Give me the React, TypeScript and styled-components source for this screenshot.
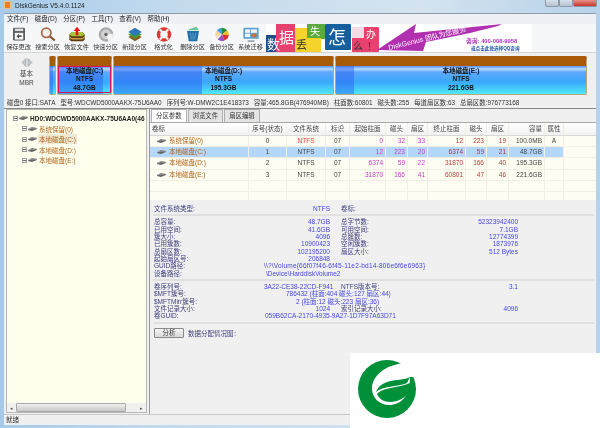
import React from 'react';
import styled, {createGlobalStyle} from 'styled-components';

const GlobalStyle = createGlobalStyle`
  html, body {
    margin: 0;
    padding: 0;
    background: #a9cdea;
  }
`;

const Window = styled.div`
  position: relative;
  width: 600px;
  height: 428px;
  overflow: hidden;
  display: flex;
  flex-direction: column;
  font-family: "Liberation Sans", "Noto Sans CJK SC", sans-serif;
  font-size: 6.5px;
  color: #333;
  background: linear-gradient(90deg, #a6cbea, #c4dbee 30%, #d4e3ef 70%, #b6d2ea);
  filter: blur(0.25px);
`;

const TitleBar = styled.div`
  height: 13px;
  flex: none;
  display: flex;
  align-items: flex-start;
  padding: 1px 3px 0 4px;
  box-sizing: border-box;
  gap: 4px;
  font-size: 6.5px;
  line-height: 9px;
  color: #222;
`;

const AppIcon = styled.div`
  width: 7px;
  height: 8px;
  border-radius: 1px;
  background: #ee7d2a;
  box-shadow: inset 0 0 0 1px #f8c080;
`;

const Controls = styled.div`
  margin-left: auto;
  display: flex;
  margin-top: -1px;
`;

const ControlButton = styled.div<{$close?: boolean}>`
  width: ${p => (p.$close ? 24 : 14)}px;
  height: 7px;
  border: 1px solid #8b98a6;
  border-top: none;
  box-sizing: border-box;
  border-radius: 0 0 2px 2px;
  background: ${p => (p.$close ? 'linear-gradient(#e8938a, #c8362a)' : 'linear-gradient(#d8e2ec, #b4c2d0)')};
`;

const Client = styled.div`
  flex: 1;
  min-height: 0;
  margin: 0 4px 3px 4px;
  border-top: 1px solid #8f9aa6;
  display: flex;
  flex-direction: column;
  background: #f0f0f0;
`;

const MenuBar = styled.div`
  height: 10px;
  flex: none;
  display: flex;
  gap: 6.5px;
  padding-left: 3px;
  line-height: 9px;
  background: #edf1f6;
  color: #222;
`;

const ToolBar = styled.div`
  height: 29px;
  box-sizing: border-box;
  flex: none;
  display: flex;
  background: #f6f7f8;
  border-bottom: 1px solid #d4d4d4;
`;

const ToolGroup = styled.div`
  display: flex;
  width: 262px;
  flex: none;
`;

const ToolButton = styled.div`
  width: 29px;
  flex: none;
  display: flex;
  flex-direction: column;
  align-items: center;
  padding-top: 2px;
  font-size: 6.2px;
  line-height: 8px;
  white-space: nowrap;
  color: #333;
  svg {
    width: 18px;
    height: 17px;
    flex: none;
  }
`;

const Banner = styled.svg`
  width: 266px;
  height: 28px;
  flex: none;
  background: #fff;
`;

const DiskArea = styled.div`
  height: 44px;
  flex: none;
  display: flex;
  background: #f0f0f0;
  padding-top: 3px;
  box-sizing: border-box;
`;

const DiskNav = styled.div`
  width: 45px;
  flex: none;
  display: flex;
  flex-direction: column;
  align-items: center;
  line-height: 9px;
  color: #444;
  svg {
    width: 12px;
    height: 9px;
    margin: 2px 0 2px;
  }
`;

const PartitionBar = styled.div`
  display: flex;
  gap: 1px;
  width: 538px;
  height: 39px;
  flex: none;
`;

const Partition = styled.div<{$grow: number; $used: number}>`
  position: relative;
  flex: 0 0 ${p => p.$grow}px;
  box-sizing: border-box;
  border: 1px solid #b6a878;
  border-top: 10px solid #a85a08;
  border-radius: 2px;
  display: flex;
  flex-direction: column;
  align-items: center;
  padding-top: 0.5px;
  font-weight: bold;
  line-height: 8.7px;
  color: #111;
  overflow: hidden;
  background:
    linear-gradient(90deg, rgba(40, 90, 240, 0.45) ${p => p.$used}%, transparent ${p => p.$used}%),
    linear-gradient(#4c8ff6 0, #bcdcff 3px, #5ea8fb 6px, #3aa8fb 16px, #4fe9fb 100%);
`;

const PartitionLine = styled.div`
  position: relative;
`;

const Highlight = styled.div`
  position: absolute;
  inset: 0 0 1px 0;
  border: 1.5px solid #e0105c;
`;

const DiskInfo = styled.div`
  height: 12px;
  box-sizing: border-box;
  flex: none;
  display: flex;
  gap: 5px;
  padding-left: 3px;
  align-items: center;
  white-space: nowrap;
  color: #333;
  font-size: 6.4px;
  border-bottom: 1px solid #888;
`;

const Panes = styled.div`
  flex: 1;
  min-height: 0;
  display: flex;
  gap: 2px;
  padding-left: 2px;
`;

const TreePane = styled.div`
  width: 141px;
  flex: none;
  display: flex;
  flex-direction: column;
  background: #ffffee;
  border: 1px solid #b8b8b8;
  box-sizing: border-box;
  margin-bottom: 1px;
`;

const Tree = styled.div`
  flex: 1;
  padding: 3px 0 0 6px;
  overflow: hidden;
`;

const TreeNode = styled.div<{$child?: boolean; $selected?: boolean}>`
  height: 10.5px;
  display: flex;
  align-items: center;
  gap: 1px;
  padding-left: ${p => (p.$child ? 9 : 0)}px;
  white-space: nowrap;
  font-weight: ${p => (p.$child ? 'normal' : 'bold')};
  color: ${p => (p.$child ? '#b0641a' : '#222')};
  svg {
    flex: none;
  }
  span {
    background: ${p => (p.$selected ? '#eee9d4' : 'transparent')};
    padding: 0 1px;
  }
`;

const Expander = styled.div`
  position: relative;
  width: 5px;
  height: 5px;
  flex: none;
  box-sizing: border-box;
  border: 1px solid #9a9a9a;
  background: #fff;
  &::after {
    content: '';
    position: absolute;
    left: 0;
    top: 1px;
    width: 3px;
    height: 1px;
    background: #667;
  }
`;

const HBar = styled.div`
  height: 9px;
  flex: none;
  display: flex;
  align-items: center;
  background: #f0f0f0;
  color: #555;
  font-size: 5px;
  justify-content: space-between;
  padding: 0 3px;
  position: relative;
`;

const HThumb = styled.div`
  position: absolute;
  left: 9px;
  right: 20px;
  top: 0;
  bottom: 0;
  border: 1px solid #a8a8a8;
  box-sizing: border-box;
  border-radius: 1px;
  background: linear-gradient(#f0f0f0, #c8c8c8);
`;

const RightPane = styled.div`
  flex: 1;
  min-width: 0;
  display: flex;
  flex-direction: column;
  border-left: 1px solid #9a9a9a;
`;

const Tabs = styled.div`
  height: 14px;
  flex: none;
  display: flex;
  padding-left: 1px;
  border-bottom: 1px solid #a8a8a8;
  box-sizing: border-box;
`;

const Tab = styled.div<{$active?: boolean}>`
  padding: 0 4px;
  line-height: 12px;
  border: 1px solid #b0b0b0;
  border-bottom: none;
  background: ${p => (p.$active ? '#fff' : '#e4e4e4')};
  margin-right: 1px;
  color: #333;
  font-size: 6.4px;
`;

const Table = styled.div`
  flex: none;
  height: 77px;
  overflow: hidden;
  background: #fffdf2;
`;

const columns = '99px 38px 39px 24px 36px 22px 20px 38px 21px 22px 36px 19px 1fr';

const TableRow = styled.div<{$selected?: boolean; $header?: boolean}>`
  display: grid;
  grid-template-columns: ${columns};
  height: ${p => (p.$header ? 13 : 11.2)}px;
  background: ${p => (p.$header ? 'linear-gradient(#fff, #f2f2f2)' : 'transparent')};
  border-bottom: 1px solid ${p => (p.$header ? '#d8d8d8' : '#f2f0e6')};
  box-sizing: border-box;
  line-height: ${p => (p.$header ? 12 : 10)}px;
  color: #444;
  white-space: nowrap;
`;

const Cell = styled.div<{$align?: string; $color?: string; $on?: boolean; $last?: boolean}>`
  text-align: ${p => p.$align ?? 'center'};
  color: ${p => p.$color ?? 'inherit'};
  padding: 0 2px;
  box-sizing: border-box;
  border-right: ${p => (p.$last ? 'none' : '1px solid #efefe4')};
  background: ${p => (p.$on ? '#b4d8fd' : 'transparent')};
  min-width: 0;
  overflow: hidden;
`;

const NameCell = styled(Cell)`
  display: flex;
  align-items: center;
  gap: 3px;
  padding-left: 7px;
  color: #b0641a;
  svg {
    flex: none;
  }
`;

const Details = styled.div`
  flex: 1;
  min-height: 0;
  padding: 5px 2px 0 3px;
`;

const Section = styled.div`
  padding: 0 0 2px;
  margin-bottom: 2px;
  border-bottom: 2px solid #e0e0e0;
`;

const InfoRow = styled.div`
  display: grid;
  grid-template-columns: 110px 66px 11px 82px 95px;
  height: 7.33px;
  line-height: 7.33px;
  white-space: nowrap;
  color: #3c3c7c;
  padding-left: 1px;
`;

const Value = styled.div`
  color: #4646e6;
  text-align: right;
`;

const WideValue = styled.div<{$pad: number; $track?: number}>`
  grid-column: 2 / -1;
  color: #4646e6;
  padding-left: ${p => p.$pad}px;
  letter-spacing: ${p => p.$track ?? 0}px;
`;

const AnalyzeRow = styled.div`
  display: flex;
  align-items: center;
  gap: 4px;
  padding: 2px 0 0 1px;
  color: #3c3c7c;
`;

const AnalyzeButton = styled.div`
  width: 30px;
  height: 10px;
  box-sizing: border-box;
  border: 1px solid #8a8a8a;
  border-radius: 1px;
  background: linear-gradient(#f6f6f6, #d8d8d8);
  text-align: center;
  line-height: 8px;
  color: #333;
`;

const StatusBar = styled.div`
  height: 10px;
  flex: none;
  border-top: 1px solid #c8c8c8;
  padding-left: 2px;
  line-height: 9px;
  background: #f0f0f0;
  color: #333;
`;

const LogoBox = styled.div`
  position: absolute;
  left: 350px;
  top: 353px;
  width: 250px;
  height: 75px;
  background: #fff;
  svg {
    position: absolute;
    left: 8px;
    top: 7px;
  }
`;

const menus = ['文件(F)', '磁盘(D)', '分区(P)', '工具(T)', '查看(V)', '帮助(H)'];

const tools: [string, React.ReactNode][] = [
  ['保存更改', <>
    <rect x="3" y="2" width="14" height="15" rx="1.5" fill="#555"/>
    <rect x="5" y="3" width="10" height="3" fill="#ddd"/>
    <rect x="5" y="8" width="10" height="8" fill="#f4f4f4"/>
    <path d="M7 12l3-3v2h3v2h-3v2z" fill="#555"/>
  </>],
  ['搜索分区', <>
    <circle cx="8" cy="8" r="5.5" fill="#f4efe8" stroke="#a8664a" strokeWidth="2"/>
    <path d="M12 12l6 5" stroke="#8a4a30" strokeWidth="2.4"/>
  </>],
  ['恢复文件', <>
    <path d="M1 10l3-3h12l3 3v6l-2 2H3l-2-2z" fill="#5a3a10"/>
    <path d="M1 10l3-3h12l3 3-3 2H4z" fill="#a8c23a"/>
    <path d="M1 12l3 2h12l3-2v2l-3 2H4l-3-2z" fill="#c8a050"/>
    <path d="M8.5 11V6H6l4-5 4 5h-2.500v5z" fill="#e81818"/>
  </>],
  ['快速分区', <>
    <circle cx="10" cy="10" r="8.500" fill="#a8a8a8"/>
    <circle cx="10" cy="10" r="6" fill="#d0d0d0"/>
    <path d="M10 10l8-1 0 7-5 2z" fill="#f4f4f4"/>
    <circle cx="10" cy="10" r="2" fill="#666"/>
  </>],
  ['新建分区', <>
    <path d="M10 9l8 4-8 5-8-5z" fill="#8a5a20"/>
    <path d="M10 6l8 4-8 5-8-5z" fill="#4a9a30"/>
    <path d="M10 2l8 5-8 5-8-5z" fill="#2a78b8"/>
  </>],
  ['格式化', <>
    <circle cx="10" cy="10" r="6.500" fill="none" stroke="#d83a30" strokeWidth="4"/>
    <path d="M5 4l3 3M15 4l-3 3M5 16l3-3M15 16l-3-3" stroke="#f4f4f4" strokeWidth="2.500"/>
  </>],
  ['删除分区', <>
    <path d="M3 6h14l-2 12H5z" fill="#1f6fa8"/>
    <path d="M2 5l12-4 3 4z" fill="#6cc29a"/>
    <path d="M7 8l1 8M10 8v8M13 8l-1 8" stroke="#7ab4d8" strokeWidth="0.800"/>
  </>],
  ['备份分区', <>
    <circle cx="10" cy="10" r="8" fill="#eee"/>
    <path d="M10 10V2a8 8 0 0 1 6 3z" fill="#2a8a3a"/>
    <path d="M10 10l6-5a8 8 0 0 1 2 6z" fill="#e8c020"/>
    <path d="M10 10l8 1a8 8 0 0 1-5 6z" fill="#d83030"/>
    <path d="M10 10l3 7a8 8 0 0 1-8-1z" fill="#9a50c0"/>
    <path d="M10 10l-7 3a8 8 0 0 1 1-8z" fill="#f0d8a0"/>
    <path d="M10 10L4 5a8 8 0 0 1 6-3z" fill="#3aa0d8"/>
  </>],
  ['系统迁移', <>
    <rect x="1" y="2" width="18" height="13" rx="1" fill="#5aa0d0"/>
    <rect x="3" y="4" width="6" height="4" fill="#f0f6fc"/>
    <rect x="3" y="9" width="6" height="4" fill="#f0f6fc"/>
    <rect x="10" y="4" width="7" height="4" fill="#f0f6fc"/>
    <path d="M6 17h8v1.500H6z" fill="#7a8a98"/>
    <path d="M10 10h4V8l3 3-3 3v-2h-4z" fill="#e8641a"/>
  </>],
];

const partitions = [
  {width: 7, used: 60, lines: []},
  {width: 55, used: 85, lines: ['本地磁盘(C:)', 'NTFS', '48.7GB'], highlight: true},
  {width: 221, used: 40, lines: ['本地磁盘(D:)', 'NTFS', '195.3GB']},
  {width: 252, used: 7, lines: ['本地磁盘(E:)', 'NTFS', '221.6GB']},
];

const names = ['系统保留(0)', '本地磁盘(C:)', '本地磁盘(D:)', '本地磁盘(E:)'];

const rows = [
  {name: names[0], cells: ['0', 'NTFS', '07', '0', '32', '33', '12', '223', '19', '100.0MB', 'A']},
  {name: names[1], cells: ['1', 'NTFS', '07', '12', '223', '20', '6374', '59', '21', '48.7GB', ''], selected: true},
  {name: names[2], cells: ['2', 'NTFS', '07', '6374', '59', '22', '31870', '166', '40', '195.3GB', '']},
  {name: names[3], cells: ['3', 'NTFS', '07', '31870', '166', '41', '60801', '47', '46', '221.6GB', '']},
];

const headers = ['序号(状态)', '文件系统', '标识', '起始柱面', '磁头', '扇区', '终止柱面', '磁头', '扇区', '容量', '属性'];

const DriveIcon = () => (
  <svg width="9" height="6" viewBox="0 0 9 6">
    <path d="M0 3l4-2 5 1v1L4 5 0 4z" fill="#666"/>
    <path d="M0 3l4-1 5 0" stroke="#ccc" strokeWidth="0.600" fill="none"/>
  </svg>
);

const cellColor = (col: number, row: number, selected?: boolean) => {
  if (col === 1 && row === 0) return '#f03c3c';
  if (col >= 3 && col <= 5) return '#c63cc8';
  if (col >= 6 && col <= 8) return selected ? '#a03c50' : '#b83c3c';
  return undefined;
};

const cellAlign = (col: number) => (col >= 3 && col <= 9 ? 'right' : 'center');

function PartitionTable() {
  const blank = Array.from({length: 12}, (_, i) => i);
  return <Table>
    <TableRow $header>
      <Cell $align="left">卷标</Cell>
      {headers.map((h, i) => <Cell key={i} $align={i === 9 ? 'right' : 'center'}>{h}</Cell>)}
      <Cell $last/>
    </TableRow>
    {rows.map((row, r) => (
      <TableRow key={row.name}>
        <NameCell $on={row.selected}><DriveIcon/>{row.name}</NameCell>
        {row.cells.map((c, i) => (
          <Cell key={i} $on={row.selected} $align={cellAlign(i)} $color={cellColor(i, r, row.selected)}>{c}</Cell>
        ))}
        <Cell $last/>
      </TableRow>
    ))}
    {[0, 1].map(r => (
      <TableRow key={r}>
        {blank.map(i => <Cell key={i}/>)}
        <Cell $last/>
      </TableRow>
    ))}
  </Table>;
}

function Info({a, b, c, d}: {a: string; b?: string; c?: string; d?: string}) {
  return <InfoRow>
    <div>{a}</div>
    <Value>{b}</Value>
    <div/>
    <div>{c}</div>
    <Value>{d}</Value>
  </InfoRow>;
}

function Wide({label, value, pad, track}: {label: string; value: string; pad: number; track?: number}) {
  return <InfoRow>
    <div>{label}</div>
    <WideValue $pad={pad} $track={track}>{value}</WideValue>
  </InfoRow>;
}

function DetailPanel() {
  return <Details>
    <Section>
      <Info a="文件系统类型:" b="NTFS" c="卷标:"/>
    </Section>
    <Section>
      <Info a="总容量:" b="48.7GB" c="总字节数:" d="52323942400"/>
      <Info a="已用空间:" b="41.6GB" c="可用空间:" d="7.1GB"/>
      <Info a="簇大小:" b="4096" c="总簇数:" d="12774399"/>
      <Info a="已用簇数:" b="10900423" c="空闲簇数:" d="1873976"/>
      <Info a="总扇区数:" b="102195200" c="扇区大小:" d="512 Bytes"/>
      <Info a="起始扇区号:" b="206848"/>
      <Wide label="GUID路径:" value="\\?\Volume{66f07f46-6f45-11e2-bd14-806e6f6e6963}" pad={0} track={0.2}/>
      <Wide label="设备路径:" value="\Device\HarddiskVolume2" pad={2}/>
    </Section>
    <Section>
      <Info a="卷序列号:" b="3A22-CE38-22CD-F941" c="NTFS版本号:" d="3.1"/>
      <Wide label="$MFT簇号:" value="786432 (柱面:404 磁头:127 扇区:44)" pad={22}/>
      <Wide label="$MFTMirr簇号:" value="2 (柱面:12 磁头:223 扇区:36)" pad={32}/>
      <Info a="文件记录大小:" b="1024" c="索引记录大小:" d="4096"/>
      <Wide label="卷GUID:" value="059B62CA-2170-4935-9A27-1D7F97A63D71" pad={1}/>
    </Section>
    <AnalyzeRow>
      <AnalyzeButton>分析</AnalyzeButton>
      数据分配情况图：
    </AnalyzeRow>
  </Details>;
}

export default function App() {
  return <Window>
    <GlobalStyle/>
    <TitleBar>
      <AppIcon/>
      DiskGenius V5.4.0.1124
      <Controls>
        <ControlButton/>
        <ControlButton/>
        <ControlButton $close/>
      </Controls>
    </TitleBar>
    <Client>
      <MenuBar>{menus.map(m => <div key={m}>{m}</div>)}</MenuBar>
      <ToolBar>
        <ToolGroup>
          {tools.map(([label, icon]) => (
            <ToolButton key={label}>
              <svg viewBox="0 0 20 20">{icon}</svg>
              {label}
            </ToolButton>
          ))}
        </ToolGroup>
        <Banner viewBox="0 0 266 28">
          <rect x="0" y="11" width="15" height="17" fill="#1a4f8c"/>
          <rect x="10" y="0" width="19" height="28" fill="#e8416e"/>
          <rect x="29" y="4" width="12" height="24" fill="#f6d22c"/>
          <rect x="41" y="0" width="18" height="15" fill="#5aaa3c"/>
          <rect x="36" y="14" width="19" height="14" fill="#f6d22c"/>
          <rect x="59" y="0" width="26" height="26" rx="1" fill="#155f9e"/>
          <rect x="86" y="14" width="12" height="14" fill="#f6d22c"/>
          <rect x="86" y="3" width="27" height="25" rx="1" fill="#e8416e"/>
          <rect x="86" y="3" width="12" height="11" fill="#f4dce4"/>
          <text x="1" y="25" fontSize="13" fill="#fff">数</text>
          <text x="13" y="19" fontSize="15" fill="#fff">据</text>
          <text x="30" y="25" fontSize="11" fill="#333">丢</text>
          <text x="44" y="11" fontSize="10" fill="#fff">失</text>
          <text x="62" y="20" fontSize="18" fill="#fff">怎</text>
          <text x="87" y="26" fontSize="10" fill="#333">么</text>
          <text x="100" y="14" fontSize="10" fill="#fff">办</text>
          <text x="102" y="26" fontSize="10" fill="#333">!</text>
          <path d="M111 26L150 0l-2 9 88-9-4 2-28 7-44 9-3 9z" fill="#b030b0"/>
          <text x="123" y="26" fontSize="7" fill="#fff" transform="rotate(-13.700 123 26)">DiskGenius 团队为您服务</text>
          <text x="200" y="19" fontSize="5.800" fontWeight="bold" fill="#b030c0">咨询: 400-008-9958</text>
          <text x="205" y="26" fontSize="4.600" fontWeight="bold" fill="#1a4fa8">或点击此处选择QQ咨询</text>
        </Banner>
      </ToolBar>
      <DiskArea>
        <DiskNav>
          <svg viewBox="0 0 12 9">
            <path d="M5 0.500L1 4.500l4 4zM7 0.500l4 4-4 4z" fill="#c4c8cc" stroke="#8a8a8a" strokeWidth="0.500"/>
          </svg>
          <div>基本</div>
          <div>MBR</div>
        </DiskNav>
        <PartitionBar>
          {partitions.map((p, i) => (
            <Partition key={i} $grow={p.width} $used={p.used}>
              {p.lines.map(l => <PartitionLine key={l}>{l}</PartitionLine>)}
              {p.highlight ? <Highlight/> : null}
            </Partition>
          ))}
        </PartitionBar>
      </DiskArea>
      <DiskInfo>
        <span>磁盘0 接口:SATA</span>
        <span>型号:WDCWD5000AAKX-75U6AA0</span>
        <span>序列号:W-DMW2C1E418373</span>
        <span>容量:465.8GB(476940MB)</span>
        <span>柱面数:60801</span>
        <span>磁头数:255</span>
        <span>每道扇区数:63</span>
        <span>总扇区数:976773168</span>
      </DiskInfo>
      <Panes>
        <TreePane>
          <Tree>
            <TreeNode>
              <Expander/>
              <DriveIcon/>
              <span>HD0:WDCWD5000AAKX-75U6AA0(46</span>
            </TreeNode>
            {names.map((n, i) => (
              <TreeNode key={n} $child $selected={i === 1}>
                <Expander/>
                <DriveIcon/>
                <span>{n}</span>
              </TreeNode>
            ))}
          </Tree>
          <HBar>
            <span>◂</span>
            <HThumb/>
            <span>▸</span>
          </HBar>
        </TreePane>
        <RightPane>
          <Tabs>
            <Tab $active>分区参数</Tab>
            <Tab>浏览文件</Tab>
            <Tab>扇区编辑</Tab>
          </Tabs>
          <PartitionTable/>
          <DetailPanel/>
        </RightPane>
      </Panes>
      <StatusBar>就绪</StatusBar>
    </Client>
    <LogoBox>
      <svg width="60" height="60" viewBox="0 0 60 60">
        <circle cx="29" cy="29" r="29" fill="#00903a"/>
        <path d="M40 4C26 7 14 16 14 29c0 9 8 16 17 16 12 0 21-9 21-28h8V0z" fill="#fff"/>
        <path d="M52 17C44 22 24 17 18 32c8-7 24-5 31-9 1-2 2-4 3-6z" fill="#00903a"/>
        <path d="M19 34c6-7 23-6 33-11v7c-4 8-12 12-20 12-6 0-11-3-13-8z" fill="#00903a"/>
      </svg>
    </LogoBox>
  </Window>;
}
